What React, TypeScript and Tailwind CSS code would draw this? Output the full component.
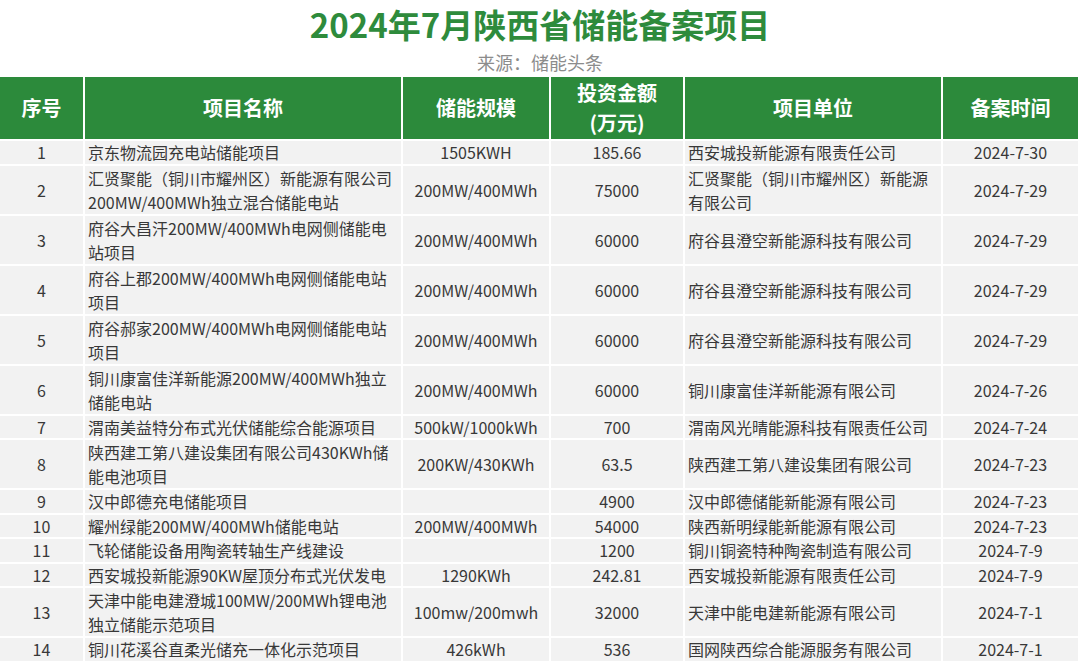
import React from 'react'

type Row = {
  no: string
  name: string[]
  scale: string
  invest: string
  unit: string[]
  date: string
}

const rows: Row[] = [
  { no: '1', name: ['京东物流园充电站储能项目'], scale: '1505KWH', invest: '185.66', unit: ['西安城投新能源有限责任公司'], date: '2024-7-30' },
  { no: '2', name: ['汇贤聚能（铜川市耀州区）新能源有限公司', '200MW/400MWh独立混合储能电站'], scale: '200MW/400MWh', invest: '75000', unit: ['汇贤聚能（铜川市耀州区）新能源', '有限公司'], date: '2024-7-29' },
  { no: '3', name: ['府谷大昌汗200MW/400MWh电网侧储能电', '站项目'], scale: '200MW/400MWh', invest: '60000', unit: ['府谷县澄空新能源科技有限公司'], date: '2024-7-29' },
  { no: '4', name: ['府谷上郡200MW/400MWh电网侧储能电站', '项目'], scale: '200MW/400MWh', invest: '60000', unit: ['府谷县澄空新能源科技有限公司'], date: '2024-7-29' },
  { no: '5', name: ['府谷郝家200MW/400MWh电网侧储能电站', '项目'], scale: '200MW/400MWh', invest: '60000', unit: ['府谷县澄空新能源科技有限公司'], date: '2024-7-29' },
  { no: '6', name: ['铜川康富佳洋新能源200MW/400MWh独立', '储能电站'], scale: '200MW/400MWh', invest: '60000', unit: ['铜川康富佳洋新能源有限公司'], date: '2024-7-26' },
  { no: '7', name: ['渭南美益特分布式光伏储能综合能源项目'], scale: '500kW/1000kWh', invest: '700', unit: ['渭南风光晴能源科技有限责任公司'], date: '2024-7-24' },
  { no: '8', name: ['陕西建工第八建设集团有限公司430KWh储', '能电池项目'], scale: '200KW/430KWh', invest: '63.5', unit: ['陕西建工第八建设集团有限公司'], date: '2024-7-23' },
  { no: '9', name: ['汉中郎德充电储能项目'], scale: '', invest: '4900', unit: ['汉中郎德储能新能源有限公司'], date: '2024-7-23' },
  { no: '10', name: ['耀州绿能200MW/400MWh储能电站'], scale: '200MW/400MWh', invest: '54000', unit: ['陕西新明绿能新能源有限公司'], date: '2024-7-23' },
  { no: '11', name: ['飞轮储能设备用陶瓷转轴生产线建设'], scale: '', invest: '1200', unit: ['铜川铜瓷特种陶瓷制造有限公司'], date: '2024-7-9' },
  { no: '12', name: ['西安城投新能源90KW屋顶分布式光伏发电'], scale: '1290KWh', invest: '242.81', unit: ['西安城投新能源有限责任公司'], date: '2024-7-9' },
  { no: '13', name: ['天津中能电建澄城100MW/200MWh锂电池', '独立储能示范项目'], scale: '100mw/200mwh', invest: '32000', unit: ['天津中能电建新能源有限公司'], date: '2024-7-1' },
  { no: '14', name: ['铜川花溪谷直柔光储充一体化示范项目'], scale: '426kWh', invest: '536', unit: ['国网陕西综合能源服务有限公司'], date: '2024-7-1' },
]

function Lines({ lines }: { lines: string[] }) {
  return (
    <>
      {lines.map((l, i) => (
        <div key={i} className="whitespace-nowrap">{l}</div>
      ))}
    </>
  )
}

export default function App() {
  return (
    <div className="w-[1080px] h-[665px] overflow-hidden bg-white font-['Noto_Sans_CJK_SC',sans-serif]">
      <h1 className="pt-[4px] text-center text-[33px] font-bold leading-[40px] text-[#2e8b3c]">
        2024年7月陕西省储能备案项目
      </h1>
      <p className="mt-[5px] text-center text-[18px] leading-[26px] text-[#8c8c8c]">来源：储能头条</p>

      <div className="mt-[2px] grid w-[1078px] grid-cols-[83px_316px_146px_132px_256px_135px] gap-[2px] text-[16px] text-[#383838]">
        {/* header */}
        {['序号', '项目名称', '储能规模', '', '项目单位', '备案时间'].map((h, i) =>
          i === 3 ? (
            <div key={i} className="flex h-[62px] flex-col items-center justify-center bg-[#2c8a3b] text-[20px] font-bold leading-[30px] text-white">
              <div>投资金额</div>
              <div>(万元)</div>
            </div>
          ) : (
            <div key={i} className="flex h-[62px] items-center justify-center bg-[#2c8a3b] text-[20px] font-bold text-white">
              {h}
            </div>
          )
        )}

        {rows.map((r) => {
          const tall = r.name.length > 1
          const h = tall ? 'h-[48px] leading-[24px]' : 'h-[22.5px] leading-[22.5px]'
          return (
            <React.Fragment key={r.no}>
              <div className={`flex items-center justify-center bg-[#f2f2f2] ${h}`}>{r.no}</div>
              <div className={`flex flex-col justify-center bg-[#f2f2f2] pl-[3px] ${h}`}>
                <Lines lines={r.name} />
              </div>
              <div className={`flex items-center justify-center bg-[#f2f2f2] ${h}`}>{r.scale}</div>
              <div className={`flex items-center justify-center bg-[#f2f2f2] ${h}`}>{r.invest}</div>
              <div className={`flex flex-col justify-center bg-[#f2f2f2] pl-[3px] ${h}`}>
                <Lines lines={r.unit} />
              </div>
              <div className={`flex items-center justify-center bg-[#f2f2f2] ${h}`}>{r.date}</div>
            </React.Fragment>
          )
        })}
      </div>
    </div>
  )
}
